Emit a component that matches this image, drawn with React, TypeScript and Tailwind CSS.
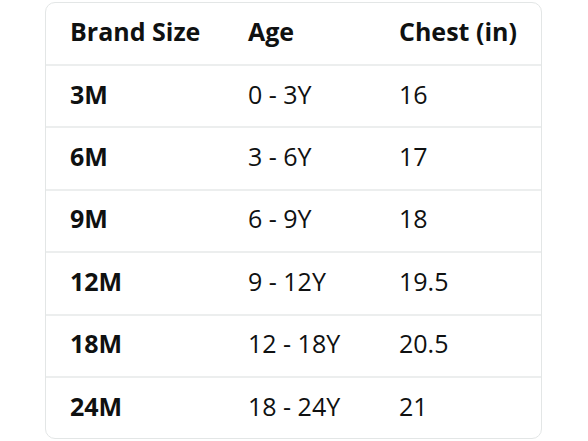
import React from "react";

const rows = [
  ["3M", "0 - 3Y", "16"],
  ["6M", "3 - 6Y", "17"],
  ["9M", "6 - 9Y", "18"],
  ["12M", "9 - 12Y", "19.5"],
  ["18M", "12 - 18Y", "20.5"],
  ["24M", "18 - 24Y", "21"],
];

export default function App() {
  return (
    <div className="w-[588px] h-[441px] bg-white pt-[2px] pl-[45px] font-['Open_Sans',sans-serif] text-[#0f1111]">
      <div className="w-[497px] border border-[#e3e6e6] rounded-[10px] overflow-hidden">
        <div className="grid grid-cols-[178px_151px_1fr] h-[61px] items-center pb-1 text-[25px] leading-none font-bold">
          <div className="pl-6">Brand Size</div>
          <div className="pl-6">Age</div>
          <div className="pl-6">Chest (in)</div>
        </div>
        {rows.map((r) => (
          <div
            key={r[0]}
            className="grid grid-cols-[178px_151px_1fr] h-[62.4px] items-center pb-1 text-[25px] leading-none border-t-2 border-[#eceeee]"
          >
            <div className="pl-6 font-bold">{r[0]}</div>
            <div className="pl-6">{r[1]}</div>
            <div className="pl-6">{r[2]}</div>
          </div>
        ))}
      </div>
    </div>
  );
}
